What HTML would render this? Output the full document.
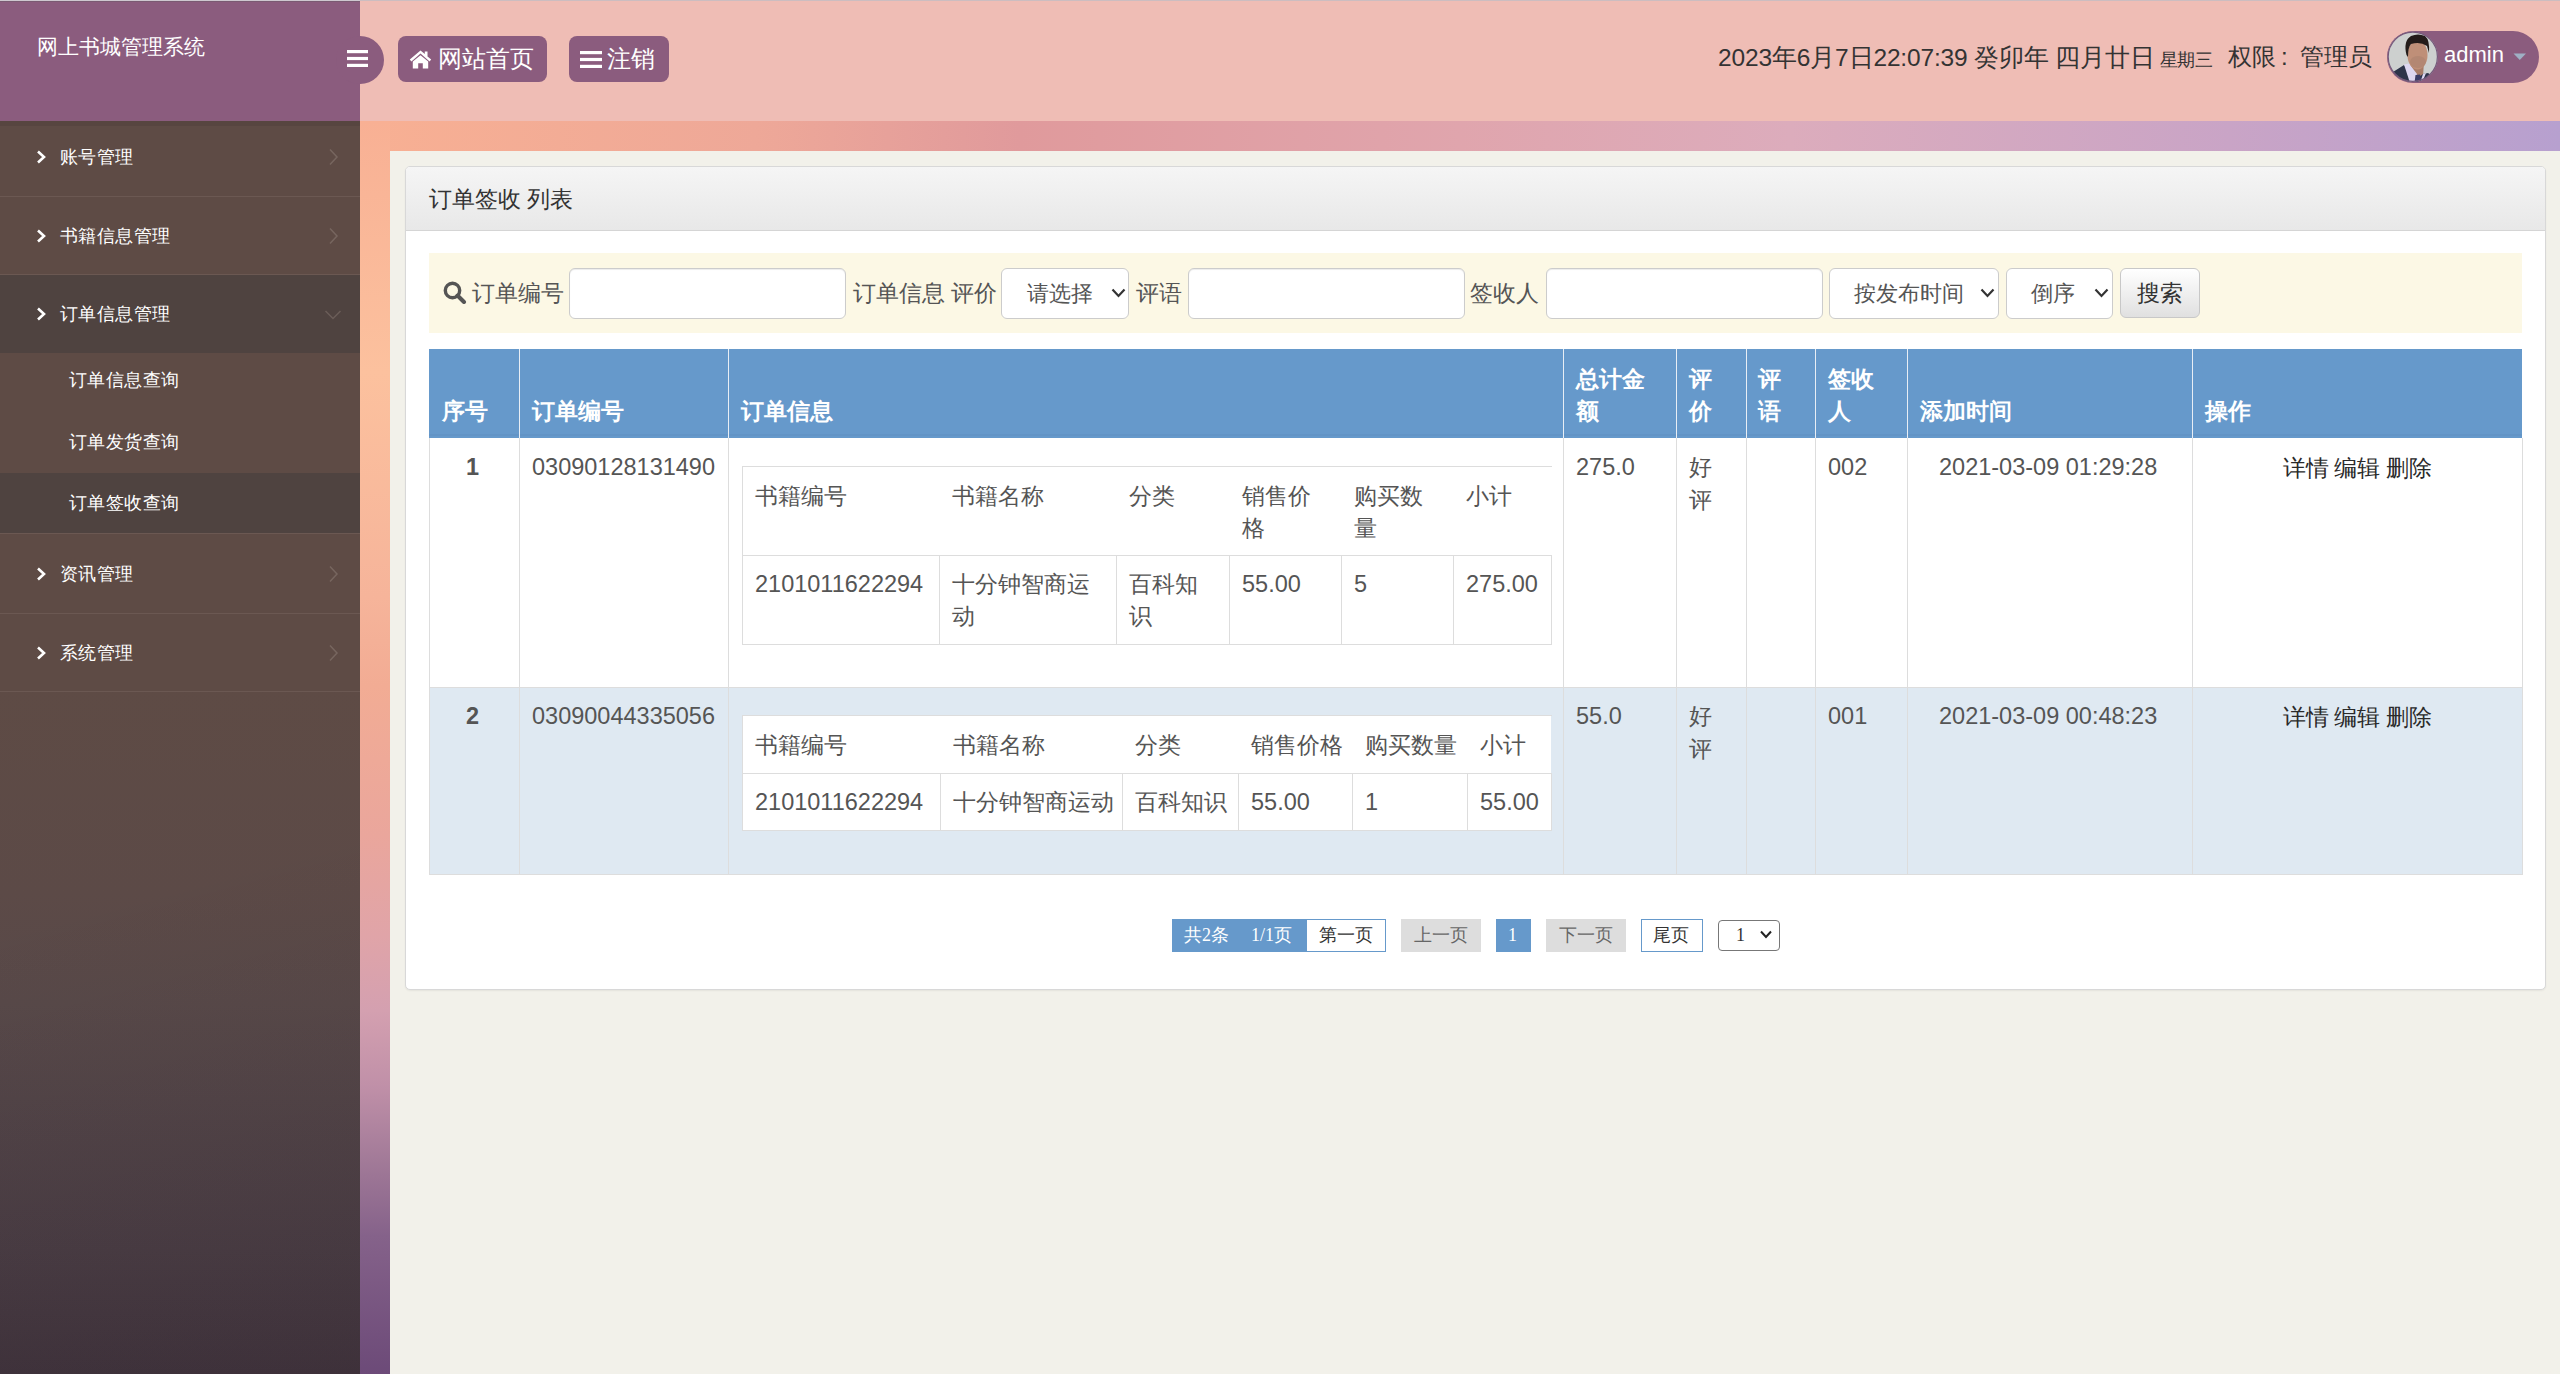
<!DOCTYPE html>
<html><head><meta charset="utf-8">
<style>
*{box-sizing:border-box;margin:0;padding:0}
html,body{width:2560px;height:1374px;overflow:hidden}
body{position:relative;font-family:"Liberation Sans",sans-serif;color:#555;background:#f2f1ea}
.abs{position:absolute}
/* background strips */
#topstrip{left:360px;top:121px;width:2200px;height:30px;background:linear-gradient(90deg,#f8b093 0%,#eea898 18%,#e09a9c 30%,#e0a5ad 50%,#dcacbc 65%,#c9a4c6 85%,#b7a0cf 100%)}
#leftstrip{left:360px;top:121px;width:30px;height:1253px;background:linear-gradient(180deg,#f8b094 0%,#fcc19e 20%,#f6b49a 38%,#f2ac94 45%,#eaa69c 57%,#e0a4a8 65%,#d4a0b0 71%,#c090a8 77%,#a27a98 83%,#85628a 89%,#6c4a78 100%)}
/* sidebar */
#side{left:0;top:0;width:360px;height:1374px;background:linear-gradient(165deg,rgba(0,0,0,0) 62%,rgba(15,5,15,.10) 100%),linear-gradient(180deg,#5e4b45 0%,#5e4b45 50%,#5c4a47 65%,#584949 73%,#534548 80%,#4b3e45 91%,#43363f 100%)}
#logo{left:0;top:0;width:360px;height:121px;background:#8b5c7e;border-top:1px solid #cec8d0;box-shadow:inset 0 1px 0 #7a5a72}
#logo span{position:absolute;left:37px;top:31px;font-size:21px;color:#fff;line-height:30px;white-space:nowrap}
.mt{position:absolute;color:#fff;font-size:18px;letter-spacing:0.4px;line-height:30px;white-space:nowrap}
.mi{position:absolute;left:0;width:360px;color:#fff;font-size:19px;line-height:30px;border-bottom:1px solid #6a5853}
.mi .t{position:absolute;left:60px;white-space:nowrap}
.mi .chev{position:absolute;left:36px;width:12px;height:14px}
.mi .rchev{position:absolute;left:328px;width:10px;height:16px}
.sub{position:absolute;left:0;width:360px;color:#fff;font-size:19px;line-height:30px}
.sub .t{position:absolute;left:69px;white-space:nowrap}
/* header */
#hdr{left:360px;top:0;width:2200px;height:121px;background:#efbdb5;border-top:1px solid #ccbdc0}
#toggle{left:336px;top:36px;width:48px;height:48px;border-radius:24px;background:#8b5c7e}
.nt{position:absolute;color:#fff;font-size:24px;line-height:32px;white-space:nowrap}
.nbtn{position:absolute;top:36px;height:46px;background:#8b5c7e;border-radius:8px;color:#fff;font-size:24px;line-height:46px;white-space:nowrap}
#date{left:1718px;top:38px;font-size:24.5px;letter-spacing:-0.15px;color:#333;line-height:40px;white-space:nowrap}
#pill{left:2387px;top:31px;width:152px;height:52px;border-radius:26px;background:#8b5c7e}
/* main */
#main{left:390px;top:151px;width:2170px;height:1223px;background:#f2f1ea}
#panel{left:405px;top:166px;width:2141px;height:824px;background:#fff;border:1px solid #d8d8d8;border-radius:5px;overflow:hidden;box-shadow:0 1px 2px rgba(0,0,0,.06)}
#phead{left:0;top:0;width:2139px;height:64px;background:linear-gradient(180deg,#f5f5f5,#e8e8e8);border-bottom:1px solid #d5d5d5}
#phead span{position:absolute;left:23px;top:16px;font-size:23px;color:#333;line-height:32px;white-space:nowrap}
#sbar{left:429px;top:253px;width:2093px;height:80px;background:#fcf8e5}
.lbl{position:absolute;top:277px;font-size:23px;line-height:32px;color:#555;white-space:nowrap}
.inp{position:absolute;top:268px;height:51px;background:#fff;border:1px solid #ccc;border-radius:6px;box-shadow:inset 0 1px 1px rgba(0,0,0,.075)}
.sel{position:absolute;top:268px;height:51px;background:#fff;border:1px solid #ccc;border-radius:6px;font-size:22px;color:#555;line-height:49px;white-space:nowrap}
.sel .t{position:absolute;top:0}
.sel svg{position:absolute;top:19px}
#sbtn{left:2120px;top:268px;width:80px;height:50px;border:1px solid #c8c8c8;border-radius:6px;background:linear-gradient(180deg,#fff,#e0e0e0);font-size:23px;color:#333;line-height:48px;text-align:center}
/* table */
#tbl{left:429px;top:349px;border-collapse:collapse;table-layout:fixed;width:2094px}
#tbl th{background:#6699cb;color:#fff;font-weight:bold;font-size:22.5px;line-height:32.5px;text-align:left;vertical-align:bottom;padding:0 12px 11px 12px;height:89px;border-left:1px solid #e6eef6;border-bottom:2px solid #6294c6}
#tbl th:first-child{border-left:1px solid #6699cb}
#tbl td{vertical-align:top;border:1px solid #dddddd;font-size:23.5px;line-height:32px;padding:12px 12px;color:#555;white-space:nowrap}
#tbl tr.r2 td{background:#dfe9f2}
.it{border-collapse:collapse;table-layout:fixed;background:#fff;margin-top:16px;border-top:1px solid #ddd;border-left:1px solid #ddd}
.it th,.it td{font-weight:normal;font-size:23.5px;line-height:32px;text-align:left;vertical-align:top;padding:12px 13px 12px 13px;color:#555;white-space:nowrap}
.it thead th{border-bottom:1px solid #ddd}
.it td{border-right:1px solid #ddd;border-bottom:1px solid #ddd}
.th{position:absolute;color:#fff;font-weight:bold;font-size:22.5px;line-height:32px;white-space:nowrap}
.tb{position:absolute;color:#555;font-size:23.5px;line-height:32px;white-space:nowrap}
/* pager */
.pg{position:absolute;font-family:"Liberation Serif",serif;font-size:18px;line-height:33px;white-space:nowrap}
</style></head><body>
<div id="topstrip" class="abs"></div>
<div id="leftstrip" class="abs"></div>
<div id="main" class="abs"></div>
<div id="panel" class="abs"><div id="phead" class="abs"><span>订单签收 列表</span></div></div>
<div id="sbar" class="abs"></div>
<svg class="abs" style="left:443px;top:281px" width="24" height="23" viewBox="0 0 24 23"><circle cx="9.5" cy="9.5" r="7.2" fill="none" stroke="#555" stroke-width="3.4"/><path d="M14.5 14.5 L21 21" stroke="#555" stroke-width="4" stroke-linecap="round"/></svg>
<div class="lbl" style="left:472px">订单编号</div>
<div class="inp" style="left:569px;width:277px"></div>
<div class="lbl" style="left:853px">订单信息 评价</div>
<div class="sel" style="left:1001px;width:128px"><span class="t" style="left:25px">请选择</span><svg style="left:109px" width="15" height="10" viewBox="0 0 15 10"><path d="M1.5 1.5 L7.5 8 L13.5 1.5" fill="none" stroke="#333" stroke-width="2.2"/></svg></div>
<div class="lbl" style="left:1136px">评语</div>
<div class="inp" style="left:1188px;width:277px"></div>
<div class="lbl" style="left:1470px">签收人</div>
<div class="inp" style="left:1546px;width:277px"></div>
<div class="sel" style="left:1829px;width:170px"><span class="t" style="left:24px">按发布时间</span><svg style="left:150px" width="15" height="10" viewBox="0 0 15 10"><path d="M1.5 1.5 L7.5 8 L13.5 1.5" fill="none" stroke="#333" stroke-width="2.2"/></svg></div>
<div class="sel" style="left:2006px;width:107px"><span class="t" style="left:24px">倒序</span><svg style="left:87px" width="15" height="10" viewBox="0 0 15 10"><path d="M1.5 1.5 L7.5 8 L13.5 1.5" fill="none" stroke="#333" stroke-width="2.2"/></svg></div>
<div id="sbtn" class="abs">搜索</div>

<!-- sidebar -->
<div id="side" class="abs">
  <div id="logo" class="abs"><span>网上书城管理系统</span></div>
  <div class="abs" style="left:0;top:121px;width:360px;height:5px;background:#574540"></div>
  <div class="abs" style="left:0;top:196px;width:360px;height:1px;background:#6b5852"></div>
  <div class="abs" style="left:0;top:275px;width:360px;height:78px;background:#4f4340"></div>
  <div class="abs" style="left:0;top:274px;width:360px;height:1px;background:#6b5852"></div>
  <div class="abs" style="left:0;top:473px;width:360px;height:60px;background:#4f4340"></div>
  <div class="abs" style="left:0;top:533px;width:360px;height:1px;background:#6b5852"></div>
  <div class="abs" style="left:0;top:613px;width:360px;height:1px;background:#6b5852"></div>
  <div class="abs" style="left:0;top:691px;width:360px;height:1px;background:#6b5852"></div>
  <div class="mt" style="top:142px;left:60px">账号管理</div>
  <div class="mt" style="top:221px;left:60px">书籍信息管理</div>
  <div class="mt" style="top:299px;left:60px">订单信息管理</div>
  <div class="mt" style="top:365px;left:69px">订单信息查询</div>
  <div class="mt" style="top:427px;left:69px">订单发货查询</div>
  <div class="mt" style="top:488px;left:69px">订单签收查询</div>
  <div class="mt" style="top:559px;left:60px">资讯管理</div>
  <div class="mt" style="top:638px;left:60px">系统管理</div>
  <svg class="abs" style="left:35px;top:150px" width="13" height="14" viewBox="0 0 13 14"><path d="M3 1.5 L9 7 L3 12.5" fill="none" stroke="#fff" stroke-width="2.6"/></svg>
  <svg class="abs" style="left:35px;top:229px" width="13" height="14" viewBox="0 0 13 14"><path d="M3 1.5 L9 7 L3 12.5" fill="none" stroke="#fff" stroke-width="2.6"/></svg>
  <svg class="abs" style="left:35px;top:307px" width="13" height="14" viewBox="0 0 13 14"><path d="M3 1.5 L9 7 L3 12.5" fill="none" stroke="#fff" stroke-width="2.6"/></svg>
  <svg class="abs" style="left:35px;top:567px" width="13" height="14" viewBox="0 0 13 14"><path d="M3 1.5 L9 7 L3 12.5" fill="none" stroke="#fff" stroke-width="2.6"/></svg>
  <svg class="abs" style="left:35px;top:646px" width="13" height="14" viewBox="0 0 13 14"><path d="M3 1.5 L9 7 L3 12.5" fill="none" stroke="#fff" stroke-width="2.6"/></svg>
  <svg class="abs" style="left:327px;top:148px" width="13" height="18" viewBox="0 0 13 18"><path d="M3 1.5 L10 9 L3 16.5" fill="none" stroke="#77665f" stroke-width="1.5"/></svg>
  <svg class="abs" style="left:327px;top:227px" width="13" height="18" viewBox="0 0 13 18"><path d="M3 1.5 L10 9 L3 16.5" fill="none" stroke="#77665f" stroke-width="1.5"/></svg>
  <svg class="abs" style="left:324px;top:309px" width="18" height="12" viewBox="0 0 18 12"><path d="M1.5 2 L9 9.5 L16.5 2" fill="none" stroke="#6b5d58" stroke-width="1.5"/></svg>
  <svg class="abs" style="left:327px;top:565px" width="13" height="18" viewBox="0 0 13 18"><path d="M3 1.5 L10 9 L3 16.5" fill="none" stroke="#77665f" stroke-width="1.5"/></svg>
  <svg class="abs" style="left:327px;top:644px" width="13" height="18" viewBox="0 0 13 18"><path d="M3 1.5 L10 9 L3 16.5" fill="none" stroke="#77665f" stroke-width="1.5"/></svg>
</div>

<!-- header -->
<div id="hdr" class="abs"></div>
<div id="toggle" class="abs"></div>
<svg class="abs" style="left:347px;top:50px" width="21" height="17" viewBox="0 0 21 17"><rect x="0" y="0" width="21" height="3.2" fill="#fff"/><rect x="0" y="6.9" width="21" height="3.2" fill="#fff"/><rect x="0" y="13.8" width="21" height="3.2" fill="#fff"/></svg>
<div class="nbtn" style="left:398px;width:149px"></div>
<svg class="abs" style="left:409px;top:50px" width="23" height="19" viewBox="0 0 23 19"><path d="M11.5 0.5 L0.8 9.6 L2.4 11.4 L11.5 3.6 L20.6 11.4 L22.2 9.6 L18.5 6.4 L18.5 1.5 L15.8 1.5 L15.8 4.1 Z" fill="#fff"/><path d="M3.8 11.6 L11.5 5.2 L19.2 11.6 L19.2 18.5 L13.8 18.5 L13.8 13.2 L9.2 13.2 L9.2 18.5 L3.8 18.5 Z" fill="#fff"/></svg>
<div class="nt" style="left:438px;top:43px">网站首页</div>
<div class="nbtn" style="left:569px;width:100px"></div>
<svg class="abs" style="left:580px;top:51px" width="22" height="17" viewBox="0 0 22 17"><rect x="0" y="0" width="22" height="3.2" fill="#fff"/><rect x="0" y="6.9" width="22" height="3.2" fill="#fff"/><rect x="0" y="13.8" width="22" height="3.2" fill="#fff"/></svg>
<div class="nt" style="left:607px;top:43px">注销</div>
<div id="date" class="abs">2023年6月7日22:07:39 癸卯年 四月廿日 <span style="font-size:17.5px;margin-left:-2px">星期三</span></div>
<div class="abs" style="left:2228px;top:41px;font-size:24px;line-height:32px;color:#333;white-space:nowrap">权限<span style="font-family:'Liberation Sans';margin-left:5px">:</span></div><div class="abs" style="left:2300px;top:41px;font-size:24px;line-height:32px;color:#333;white-space:nowrap">管理员</div>
<div id="pill" class="abs"></div>
<svg class="abs" style="left:2387px;top:31px" width="51" height="52" viewBox="0 0 51 52">
 <defs><clipPath id="av"><circle cx="25.8" cy="25.8" r="25"/></clipPath></defs>
 <g clip-path="url(#av)">
  <rect x="0" y="0" width="51" height="52" fill="#cdd0cf"/>
  <path d="M23 30 L37 30 L36 46 L25 46 Z" fill="#a87c68"/><path d="M0 46 L6 41 L17 34 L29 48 L36 43 L41 42 L47 46 L51 52 L0 52 Z" fill="#2d3449"/>
  <path d="M17 33.5 L22 32.5 L30 43 L29 52 L23 52 Z" fill="#dcd6f0"/><path d="M36 43 L39 42 L35 52 L33 52 Z" fill="#dcd6f0"/>
  <path d="M28.5 44 L33 43.5 L35 52 L27.5 52 Z" fill="#3b3d68"/>
  <ellipse cx="30.5" cy="24" rx="10" ry="14.5" fill="#bf8f78"/>
  <ellipse cx="31" cy="31" rx="8" ry="6" fill="#a8806e" opacity=".5"/>
  <path d="M19.5 24 Q16 10 24 5 Q31 2 38 5 Q43 9 42 22 L40 15 Q33 10 24 13 Q21 16 21 26 Z" fill="#241c1a"/>
 </g>
 <circle cx="25.8" cy="25.8" r="24.6" fill="none" stroke="#75587a" stroke-width="1.2"/>
</svg>
<div class="abs" style="left:2444px;top:40px;font-size:22px;line-height:30px;color:#fff;white-space:nowrap">admin</div>
<svg class="abs" style="left:2513px;top:53px" width="14" height="8" viewBox="0 0 14 8"><path d="M0.5 0.5 L13 0.5 L6.75 7 Z" fill="#9fb0c4"/></svg>
<!--TBL-->
<div class="abs" style="left:429px;top:349px;width:2093px;height:89px;background:#6699cb"></div>
<div class="abs" style="left:429px;top:434px;width:2093px;height:2px;background:#6294c6"></div>
<div class="abs" style="left:519px;top:349px;width:1px;height:89px;background:#e8eef5"></div>
<div class="abs" style="left:728px;top:349px;width:1px;height:89px;background:#e8eef5"></div>
<div class="abs" style="left:1563px;top:349px;width:1px;height:89px;background:#e8eef5"></div>
<div class="abs" style="left:1676px;top:349px;width:1px;height:89px;background:#e8eef5"></div>
<div class="abs" style="left:1746px;top:349px;width:1px;height:89px;background:#e8eef5"></div>
<div class="abs" style="left:1815px;top:349px;width:1px;height:89px;background:#e8eef5"></div>
<div class="abs" style="left:1907px;top:349px;width:1px;height:89px;background:#e8eef5"></div>
<div class="abs" style="left:2192px;top:349px;width:1px;height:89px;background:#e8eef5"></div>
<div class="abs" style="left:429px;top:438px;width:2093px;height:249px;background:#fff"></div>
<div class="abs" style="left:429px;top:687px;width:2093px;height:187px;background:#dfe9f2"></div>
<div class="abs" style="left:429px;top:438px;width:1px;height:436px;background:#dddddd"></div>
<div class="abs" style="left:519px;top:438px;width:1px;height:436px;background:#dddddd"></div>
<div class="abs" style="left:728px;top:438px;width:1px;height:436px;background:#dddddd"></div>
<div class="abs" style="left:1563px;top:438px;width:1px;height:436px;background:#dddddd"></div>
<div class="abs" style="left:1676px;top:438px;width:1px;height:436px;background:#dddddd"></div>
<div class="abs" style="left:1746px;top:438px;width:1px;height:436px;background:#dddddd"></div>
<div class="abs" style="left:1815px;top:438px;width:1px;height:436px;background:#dddddd"></div>
<div class="abs" style="left:1907px;top:438px;width:1px;height:436px;background:#dddddd"></div>
<div class="abs" style="left:2192px;top:438px;width:1px;height:436px;background:#dddddd"></div>
<div class="abs" style="left:2522px;top:438px;width:1px;height:436px;background:#dddddd"></div>
<div class="abs" style="left:429px;top:687px;width:2094px;height:1px;background:#dddddd"></div>
<div class="abs" style="left:429px;top:874px;width:2094px;height:1px;background:#dddddd"></div>
<div class="th" style="left:442px;top:396px;">序号</div>
<div class="th" style="left:532px;top:396px;">订单编号</div>
<div class="th" style="left:741px;top:396px;">订单信息</div>
<div class="th" style="left:1576px;top:364px;">总计金</div>
<div class="th" style="left:1576px;top:396px;">额</div>
<div class="th" style="left:1689px;top:364px;">评</div>
<div class="th" style="left:1689px;top:396px;">价</div>
<div class="th" style="left:1758px;top:364px;">评</div>
<div class="th" style="left:1758px;top:396px;">语</div>
<div class="th" style="left:1828px;top:364px;">签收</div>
<div class="th" style="left:1828px;top:396px;">人</div>
<div class="th" style="left:1920px;top:396px;">添加时间</div>
<div class="th" style="left:2205px;top:396px;">操作</div>
<div class="tb" style="left:466px;top:451px;font-weight:bold">1</div>
<div class="tb" style="left:532px;top:451px;">03090128131490</div>
<div class="tb" style="left:1576px;top:451px;">275.0</div>
<div class="tb" style="left:1689px;top:452px;font-size:22.5px">好</div>
<div class="tb" style="left:1689px;top:485px;font-size:22.5px">评</div>
<div class="tb" style="left:1828px;top:451px;">002</div>
<div class="tb" style="left:1939px;top:451px;">2021-03-09 01:29:28</div>
<div class="tb" style="left:2283px;top:453px;color:#2a2a2a;font-size:22.5px;word-spacing:-1px">详情 编辑 删除</div>
<div class="abs" style="left:742px;top:466px;width:809px;height:178px;background:#fff"></div>
<div class="abs" style="left:742px;top:466px;width:810px;height:1px;background:#dddddd"></div>
<div class="abs" style="left:742px;top:466px;width:1px;height:179px;background:#dddddd"></div>
<div class="abs" style="left:742px;top:555px;width:810px;height:1px;background:#dddddd"></div>
<div class="abs" style="left:742px;top:644px;width:810px;height:1px;background:#dddddd"></div>
<div class="abs" style="left:939px;top:555px;width:1px;height:89px;background:#dddddd"></div>
<div class="abs" style="left:1116px;top:555px;width:1px;height:89px;background:#dddddd"></div>
<div class="abs" style="left:1229px;top:555px;width:1px;height:89px;background:#dddddd"></div>
<div class="abs" style="left:1341px;top:555px;width:1px;height:89px;background:#dddddd"></div>
<div class="abs" style="left:1453px;top:555px;width:1px;height:89px;background:#dddddd"></div>
<div class="abs" style="left:1551px;top:555px;width:1px;height:89px;background:#dddddd"></div>
<div class="tb" style="left:755px;top:480px;"><span style="font-size:22.5px">书籍编号</span></div>
<div class="tb" style="left:952px;top:480px;"><span style="font-size:22.5px">书籍名称</span></div>
<div class="tb" style="left:1129px;top:480px;"><span style="font-size:22.5px">分类</span></div>
<div class="tb" style="left:1242px;top:480px;"><span style="font-size:22.5px">销售价</span></div>
<div class="tb" style="left:1242px;top:512px;"><span style="font-size:22.5px">格</span></div>
<div class="tb" style="left:1354px;top:480px;"><span style="font-size:22.5px">购买数</span></div>
<div class="tb" style="left:1354px;top:512px;"><span style="font-size:22.5px">量</span></div>
<div class="tb" style="left:1466px;top:480px;"><span style="font-size:22.5px">小计</span></div>
<div class="tb" style="left:755px;top:568px;">2101011622294</div>
<div class="tb" style="left:952px;top:568px;"><span style="font-size:22.5px">十分钟智商运</span></div>
<div class="tb" style="left:952px;top:600px;"><span style="font-size:22.5px">动</span></div>
<div class="tb" style="left:1129px;top:568px;"><span style="font-size:22.5px">百科知</span></div>
<div class="tb" style="left:1129px;top:600px;"><span style="font-size:22.5px">识</span></div>
<div class="tb" style="left:1242px;top:568px;">55.00</div>
<div class="tb" style="left:1354px;top:568px;">5</div>
<div class="tb" style="left:1466px;top:568px;">275.00</div>
<div class="tb" style="left:466px;top:700px;font-weight:bold">2</div>
<div class="tb" style="left:532px;top:700px;">03090044335056</div>
<div class="tb" style="left:1576px;top:700px;">55.0</div>
<div class="tb" style="left:1689px;top:701px;font-size:22.5px">好</div>
<div class="tb" style="left:1689px;top:734px;font-size:22.5px">评</div>
<div class="tb" style="left:1828px;top:700px;">001</div>
<div class="tb" style="left:1939px;top:700px;">2021-03-09 00:48:23</div>
<div class="tb" style="left:2283px;top:702px;color:#2a2a2a;font-size:22.5px;word-spacing:-1px">详情 编辑 删除</div>
<div class="abs" style="left:742px;top:715px;width:809px;height:115px;background:#fff"></div>
<div class="abs" style="left:742px;top:715px;width:810px;height:1px;background:#dddddd"></div>
<div class="abs" style="left:742px;top:715px;width:1px;height:116px;background:#dddddd"></div>
<div class="abs" style="left:742px;top:773px;width:810px;height:1px;background:#dddddd"></div>
<div class="abs" style="left:742px;top:830px;width:810px;height:1px;background:#dddddd"></div>
<div class="abs" style="left:940px;top:773px;width:1px;height:57px;background:#dddddd"></div>
<div class="abs" style="left:1122px;top:773px;width:1px;height:57px;background:#dddddd"></div>
<div class="abs" style="left:1238px;top:773px;width:1px;height:57px;background:#dddddd"></div>
<div class="abs" style="left:1352px;top:773px;width:1px;height:57px;background:#dddddd"></div>
<div class="abs" style="left:1467px;top:773px;width:1px;height:57px;background:#dddddd"></div>
<div class="abs" style="left:1551px;top:773px;width:1px;height:57px;background:#dddddd"></div>
<div class="tb" style="left:755px;top:729px;"><span style="font-size:22.5px">书籍编号</span></div>
<div class="tb" style="left:953px;top:729px;"><span style="font-size:22.5px">书籍名称</span></div>
<div class="tb" style="left:1135px;top:729px;"><span style="font-size:22.5px">分类</span></div>
<div class="tb" style="left:1251px;top:729px;"><span style="font-size:22.5px">销售价格</span></div>
<div class="tb" style="left:1365px;top:729px;"><span style="font-size:22.5px">购买数量</span></div>
<div class="tb" style="left:1480px;top:729px;"><span style="font-size:22.5px">小计</span></div>
<div class="tb" style="left:755px;top:786px;">2101011622294</div>
<div class="tb" style="left:953px;top:786px;"><span style="font-size:22.5px">十分钟智商运动</span></div>
<div class="tb" style="left:1135px;top:786px;"><span style="font-size:22.5px">百科知识</span></div>
<div class="tb" style="left:1251px;top:786px;">55.00</div>
<div class="tb" style="left:1365px;top:786px;">1</div>
<div class="tb" style="left:1480px;top:786px;">55.00</div>
<div class="abs" style="left:1172px;top:919px;width:135px;height:33px;background:#6699cb"></div>
<div class="pg" style="left:1184px;top:919px;color:#fff">共2条</div>
<div class="pg" style="left:1251px;top:919px;color:#fff">1/1页</div>
<div class="abs" style="left:1306px;top:919px;width:80px;height:33px;background:#fff;border:1px solid #6699cb"></div>
<div class="pg" style="left:1319px;top:919px;color:#333">第一页</div>
<div class="abs" style="left:1401px;top:919px;width:80px;height:33px;background:#dddddd"></div>
<div class="pg" style="left:1414px;top:919px;color:#666">上一页</div>
<div class="abs" style="left:1496px;top:919px;width:35px;height:33px;background:#6699cb"></div>
<div class="pg" style="left:1508px;top:919px;color:#fff">1</div>
<div class="abs" style="left:1546px;top:919px;width:80px;height:33px;background:#dddddd"></div>
<div class="pg" style="left:1559px;top:919px;color:#666">下一页</div>
<div class="abs" style="left:1641px;top:919px;width:62px;height:33px;background:#fff;border:1px solid #6699cb"></div>
<div class="pg" style="left:1653px;top:919px;color:#333">尾页</div>
<div class="abs" style="left:1718px;top:920px;width:62px;height:31px;background:#fff;border:1px solid #777;border-radius:4px"></div>
<div class="pg" style="left:1736px;top:919px;color:#333">1</div>
<svg class="abs" style="left:1760px;top:930px" width="12" height="9" viewBox="0 0 12 9"><path d="M1 1.5 L6 7 L11 1.5" fill="none" stroke="#222" stroke-width="2"/></svg>
<!--/TBL-->
</body></html>
